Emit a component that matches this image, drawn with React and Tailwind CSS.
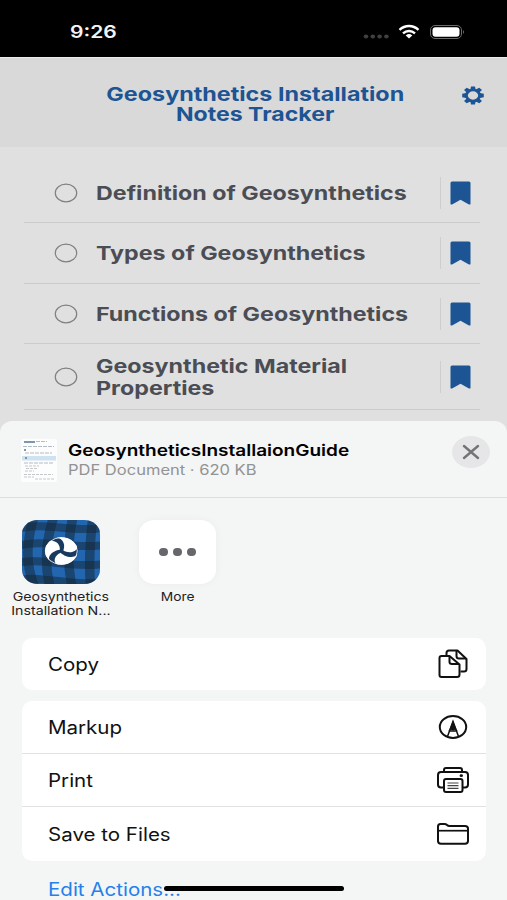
import React from "react";

const topics = [
  { lines: ["Definition of Geosynthetics"], height: "h-[59px]" },
  { lines: ["Types of Geosynthetics"], height: "h-[60px]" },
  { lines: ["Functions of Geosynthetics"], height: "h-[59px]" },
  { lines: ["Geosynthetic Material", "Properties"], height: "h-[65px]" },
];

// wide text, stretched from its left edge
function Wide({ children, className = "scale-x-[1.224]" }) {
  return (
    <span className={`inline-block origin-left whitespace-nowrap ${className}`}>
      {children}
    </span>
  );
}

function StatusBar() {
  return (
    <div className="flex h-[57px] shrink-0 items-start justify-between bg-black pl-[70px] pr-[42px] pt-[20px] text-[#f4f4f4]">
      <Wide className="scale-x-[1.24] text-[17px] font-semibold leading-6">9:26</Wide>
      <svg width="102" height="24" viewBox="0 0 102 24">
        <g fill="#404040">
          <ellipse cx="3" cy="16.500" rx="2.300" ry="2" />
          <ellipse cx="9.800" cy="16.500" rx="2.300" ry="2" />
          <ellipse cx="16.600" cy="16.500" rx="2.300" ry="2" />
          <ellipse cx="23.400" cy="16.500" rx="2.300" ry="2" />
        </g>
        <g fill="none" stroke="#fff" strokeWidth="2.400">
          <path d="M36.500 9.800C42 4.700 50 4.700 55.500 9.800" />
          <path d="M40 13.300C43.500 10.200 48.500 10.200 52 13.300" />
        </g>
        <path d="M42.700 15.400q3.300-2.600 6.600 0L46 18.400z" fill="#fff" />
        <rect x="67.500" y="5.500" width="31" height="13" rx="4.500" fill="none" stroke="#6b6b6b" />
        <rect x="69.500" y="7.200" width="27" height="9.600" rx="3" fill="#fff" />
        <path d="M100 10q2 2 0 4z" fill="#6b6b6b" />
      </svg>
    </div>
  );
}

function Header() {
  return (
    <header className="flex h-[90px] shrink-0 items-start border-t border-[#ececec] bg-[#d9d9d9] pl-[49px] pr-[23px] pt-[26px] text-[#1d5493]">
      <h1 className="flex flex-1 flex-col items-center pt-px text-[19px] font-bold leading-[20px]">
        <span className="scale-x-[1.228] whitespace-nowrap">Geosynthetics Installation</span>
        <span className="scale-x-[1.215] whitespace-nowrap">Notes Tracker</span>
      </h1>
      <svg width="22" height="19" viewBox="-11 -9.500 22 19" className="mt-[2px]">
        <g fill="#1d5493">
          <path d="M-2-9h4l.7 3.500h-5.400zM-2 9h4l.7-3.500h-5.400zM-10.800-1.800v3.600l4 .6v-4.800zM10.800-1.800v3.600l-4 .6v-4.800z" />
          <path d="M-9-5.500l2.700-2.200 3.600 1.600-3.600 3.100zM9-5.500L6.300-7.700l-3.600 1.600 3.600 3.100zM-9 5.500l2.700 2.200 3.600-1.600-3.600-3.100zM9 5.500L6.300 7.700l-3.600-1.600 3.600-3.100z" />
        </g>
        <ellipse rx="6.500" ry="5.500" fill="#d9d9d9" stroke="#1d5493" strokeWidth="2.700" />
      </svg>
    </header>
  );
}

function TopicRow({ topic }) {
  return (
    <li
      className={`box-content flex items-center border-b border-[#cbcbcb] pl-[30px] pr-[9px] ${topic.height}`}
    >
      <svg width="24" height="20" viewBox="0 0 24 20">
        <ellipse cx="12" cy="10" rx="10.700" ry="8.800" fill="none" stroke="#808080" strokeWidth="1.200" />
      </svg>
      <div className="flex flex-1 flex-col items-start pl-[18px] pt-[2px] text-[19px] font-bold leading-[22px] text-[#4b4d55]">
        {topic.lines.map((line) => (
          <Wide key={line}>{line}</Wide>
        ))}
      </div>
      <div className="mr-[9px] h-8 w-px bg-[#cecece]" />
      <svg width="21" height="24" viewBox="0 0 21 24">
        <path d="M2 .5h17q1.500 0 1.500 1.500v21q-.5 1-2 .3L10.500 18.800 2.500 23.300q-1.500.7-2-.3V2Q.5.500 2 .5z" fill="#1d5493" />
      </svg>
    </li>
  );
}

function Thumbnail() {
  return (
    <svg width="36" height="43" viewBox="0 0 36 43" className="rounded-[2px] bg-[#fdfdfd]">
      <rect x="1" y="17" width="34" height="4.500" fill="#cfe2f1" />
      <g strokeWidth="1.200" fill="none">
        <path d="M3 3h11M3 11h2M4 19h2" stroke="#7f96ad" strokeWidth="1.800" />
        <path d="M15 2.500h11M2 7.500h31M4 14h27M3 24h30" stroke="#b3bbc4" strokeDasharray="4 1" />
        <path d="M4 27h14M5 29.500h12M4 32h9M3 35.500h29M3 38h10M14 40h19" stroke="#c4c9cd" strokeDasharray="3 1" />
      </g>
    </svg>
  );
}

const armPath = "M-10.500-10C-5-11.300-.8-7 -1.200-1.200L1.200 .8C4-5 2-13.500-4.500-13.300Q-8.500-12.500-10.500-10z";

function AppIcon() {
  return (
    <svg width="78" height="64" viewBox="0 0 78 64">
      <defs>
        <clipPath id="appShape">
          <rect width="78" height="64" rx="16" ry="14" />
        </clipPath>
      </defs>
      <g clipPath="url(#appShape)">
        <rect width="78" height="64" fill="#2266b0" />
        {/* plaid bands, darkest where they cross */}
        <g fill="none" stroke="#142431">
          <path d="M12-4C5 20 2 44 14 70M32-4C24 20 21 44 29 70M51-4C46 20 44 44 51 70M71-4C68 20 66 44 69 70" strokeWidth="9.500" opacity=".5" />
          <path d="M-4 9C20 1 48 13 82 8M-4 26C20 18 48 30 82 25M-4 43C20 37 48 49 82 44M-4 60C20 55 48 67 82 62" strokeWidth="8" opacity=".5" />
        </g>
      </g>
      <ellipse cx="39.300" cy="31" rx="16.300" ry="13.700" fill="#fff" />
      {/* three swirling arms */}
      <g transform="translate(39.300 31) scale(1.190 1)" fill="#173a5e">
        <path d={armPath} />
        <path d={armPath} transform="rotate(120)" />
        <path d={armPath} transform="rotate(240)" />
        <circle r="1.800" />
      </g>
      <ellipse cx="39.300" cy="31" rx="16" ry="13.400" fill="none" stroke="#fff" strokeWidth=".8" />
    </svg>
  );
}

function CopyIcon() {
  return (
    <svg width="30" height="30" viewBox="0 0 30 30" fill="none" stroke="#111" strokeWidth="2" strokeLinejoin="round">
      <path d="M8.500 7V4q0-2.500 2.500-2.500h8.500L28.500 10v10q0 2.500-2.500 2.500h-3.500" />
      <path d="M18.500 2v5q0 2.500 2.500 2.500h7" />
      <path d="M3.500 7H11.500l10 8.500v10q0 2.500-2.500 2.500H3.500Q1.500 28 1.500 26V9q0-2 2-2z" />
      <path d="M11.500 7.500v5.500q0 2 2.500 2h7" />
    </svg>
  );
}

function MarkupIcon() {
  return (
    <svg width="30" height="24" viewBox="0 0 30 24" fill="none" stroke="#111" strokeWidth="2">
      <ellipse cx="15" cy="12" rx="13.200" ry="10.900" />
      <path d="M9.500 21.500L15 6.500l5.500 15M10.500 16h9" strokeWidth="1.500" />
      <path d="M15 5.500l3.800 9.500q-2-1-3.800.8-1.800-1.800-3.800-.8z" fill="#111" stroke="none" />
    </svg>
  );
}

function PrintIcon() {
  return (
    <svg width="32" height="26" viewBox="0 0 32 26" fill="none" stroke="#111" strokeWidth="2" strokeLinejoin="round">
      <path d="M7 5V3q0-2 2-2h14q2 0 2 2v2" />
      <path d="M6.500 20.500H4q-3 0-3-3V8q0-3 3-3h24q3 0 3 3v9.500q0 3-3 3h-2.500" />
      <rect x="7" y="12" width="18.500" height="13" rx="2" />
      <path d="M10.500 16h11M10.500 18.700h11M10.500 21.400h11" strokeWidth="1.200" stroke="#444" />
      <ellipse cx="24.300" cy="8.700" rx="1.700" ry="1.400" fill="#111" stroke="none" />
    </svg>
  );
}

function FolderIcon() {
  return (
    <svg width="32" height="22" viewBox="0 0 32 22" fill="none" stroke="#111" strokeWidth="2" strokeLinejoin="round">
      <path d="M1 18V3.500Q1 1 3.500 1H7.500q1.500 0 2.500 1t2.500 1H28q3 0 3 2.500V18q0 2.700-3 2.700H4Q1 20.700 1 18z" />
      <path d="M1 7.700h30" strokeWidth="1.700" />
    </svg>
  );
}

function ActionRow({ label, children, className = "" }) {
  return (
    <div className={`flex items-center justify-between pl-[25.5px] text-[18px] text-[#111] ${className}`}>
      <Wide className="scale-x-[1.14]">{label}</Wide>
      <span className="flex w-[67px] justify-center">{children}</span>
    </div>
  );
}

function ShareSheet() {
  return (
    <section className="flex h-[479px] shrink-0 flex-col rounded-t-[12px] bg-[#f4f5f5]">
      <div className="flex h-[77px] shrink-0 items-start border-b border-[#dcdddd] pl-[21px] pr-[17px] pt-[15px]">
        <div className="pt-[3px]">
          <Thumbnail />
        </div>
        <div className="flex flex-1 flex-col items-start pl-[11px] pt-[4px]">
          <Wide className="scale-x-[1.188] text-[16px] font-semibold leading-[20px] text-black">
            GeosyntheticsInstallaionGuide
          </Wide>
          <Wide className="scale-x-[1.18] text-[14px] leading-[20px] text-[#929394]">
            PDF Document · 620 KB
          </Wide>
        </div>
        <button type="button" aria-label="Close">
          <svg width="38" height="32" viewBox="0 0 38 32">
            <ellipse cx="19" cy="16" rx="19" ry="16" fill="#e6e6e8" />
            <path d="M12 10l14 12M26 10L12 22" stroke="#747477" strokeWidth="2.400" strokeLinecap="round" />
          </svg>
        </button>
      </div>

      <div className="flex h-[140px] shrink-0 items-start pt-[22px] text-center text-[12px] leading-[14px] text-[#222]">
        <div className="flex w-[122px] flex-col items-center gap-[6px]">
          <AppIcon />
          <span className="scale-x-[1.185] whitespace-nowrap">
            Geosynthetics
            <br />
            Installation N...
          </span>
        </div>
        <div className="ml-[17px] flex w-[77px] flex-col items-center gap-[6px]">
          <div className="flex h-[64px] w-[77px] items-center justify-center gap-[5px] rounded-[16px/14px] bg-white shadow-[0_0_10px_rgba(0,0,0,0.04)]">
            <span className="h-2 w-[9px] rounded-full bg-[#67676b]" />
            <span className="h-2 w-[9px] rounded-full bg-[#67676b]" />
            <span className="h-2 w-[9px] rounded-full bg-[#67676b]" />
          </div>
          <span className="scale-x-[1.15]">More</span>
        </div>
      </div>

      <div className="ml-[22px] mr-[21px] rounded-[10px] bg-white">
        <ActionRow label="Copy" className="h-[52px]">
          <CopyIcon />
        </ActionRow>
      </div>
      <div className="ml-[22px] mr-[21px] mt-[11px] rounded-[10px] bg-white">
        <ActionRow label="Markup" className="h-[53px] border-b border-[#e1e1e2]">
          <MarkupIcon />
        </ActionRow>
        <ActionRow label="Print" className="h-[53px] border-b border-[#e1e1e2]">
          <PrintIcon />
        </ActionRow>
        <ActionRow label="Save to Files" className="h-[54px]">
          <FolderIcon />
        </ActionRow>
      </div>
      <div className="pl-[47.5px] pt-[16px] text-[18px] leading-[26px] text-[#2580ec]">
        <Wide className="scale-x-[1.14]">Edit Actions...</Wide>
      </div>
    </section>
  );
}

export default function App() {
  return (
    <div className="relative flex h-[900px] w-[507px] flex-col overflow-hidden bg-[#e0e0e0] font-[Inter,'Liberation_Sans',sans-serif]">
      <StatusBar />
      <Header />
      <ul className="h-[274px] shrink-0 pl-[24px] pr-[27px] pt-[16px]">
        {topics.map((topic) => (
          <TopicRow key={topic.lines[0]} topic={topic} />
        ))}
      </ul>
      <ShareSheet />
      {/* home indicator */}
      <div className="absolute left-[164px] top-[886px] h-[5px] w-[180px] rounded-full bg-black" />
    </div>
  );
}
